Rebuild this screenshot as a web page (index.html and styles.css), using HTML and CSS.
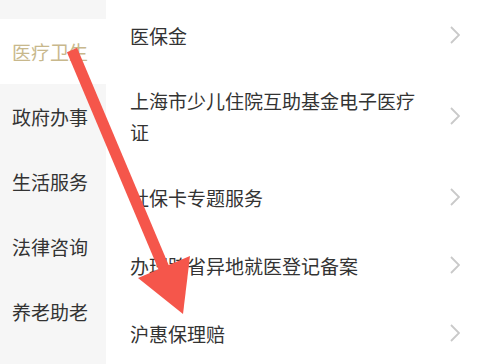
FILE: index.html
```html
<!DOCTYPE html>
<html lang="zh-CN">
<head>
<meta charset="utf-8">
<link rel="stylesheet" href="styles.css">
</head>
<body>
<div class="page">
  <nav class="sidebar">
    <div class="side-item active">医疗卫生</div>
    <div class="side-item">政府办事</div>
    <div class="side-item">生活服务</div>
    <div class="side-item">法律咨询</div>
    <div class="side-item">养老助老</div>
  </nav>
  <main class="list">
    <div class="row"><span class="label">医保金</span><svg class="chev" viewBox="0 0 10 18"><polyline points="1,1 9,9 1,17"/></svg></div>
    <div class="row"><span class="label">上海市少儿住院互助基金电子医疗证</span><svg class="chev" viewBox="0 0 10 18"><polyline points="1,1 9,9 1,17"/></svg></div>
    <div class="row"><span class="label">社保卡专题服务</span><svg class="chev" viewBox="0 0 10 18"><polyline points="1,1 9,9 1,17"/></svg></div>
    <div class="row"><span class="label">办理跨省异地就医登记备案</span><svg class="chev" viewBox="0 0 10 18"><polyline points="1,1 9,9 1,17"/></svg></div>
    <div class="row"><span class="label">沪惠保理赔</span><svg class="chev" viewBox="0 0 10 18"><polyline points="1,1 9,9 1,17"/></svg></div>
  </main>
  <svg class="arrow" viewBox="0 0 478 364">
    <line x1="72" y1="50" x2="166" y2="273"/>
    <polygon points="138,278 190,256 183,314"/>
  </svg>
</div>
</body>
</html>
```
FILE: styles.css
```css
* { box-sizing: border-box; }
html, body {
  margin: 0;
  padding: 0;
  background: #fff;
}
body {
  font-family: "Noto Sans CJK SC", "Noto Sans", sans-serif;
  font-size: 19px;
  color: #333;
}
.page {
  position: relative;
  display: flex;
  width: 478px;
  height: 364px;
  overflow: hidden;
}
.sidebar {
  width: 106px;
  flex: none;
  background: #f6f6f6;
  padding-top: 19px;
}
.side-item {
  height: 65px;
  display: flex;
  align-items: center;
  padding-left: 12px;
  color: #333;
  white-space: nowrap;
}
.side-item.active {
  background: #fff;
  color: #c8b88c;
}
.list {
  flex: 1;
  padding-top: 1px;
  padding-left: 24px;
  padding-right: 18px;
}
.row {
  display: flex;
  align-items: center;
  min-height: 68px;
  padding: 16px 0;
}
.label {
  flex: 1;
  line-height: 31px;
  margin-right: 30px;
  color: #333;
}
.chev {
  flex: none;
  width: 10px;
  height: 18px;
}
.chev polyline {
  fill: none;
  stroke: #c9c9c9;
  stroke-width: 1.8;
}
.arrow {
  position: absolute;
  left: 0;
  top: 0;
  width: 478px;
  height: 364px;
  pointer-events: none;
}
.arrow line {
  stroke: #f5564b;
  stroke-width: 11;
}
.arrow polygon {
  fill: #f5564b;
}
```
